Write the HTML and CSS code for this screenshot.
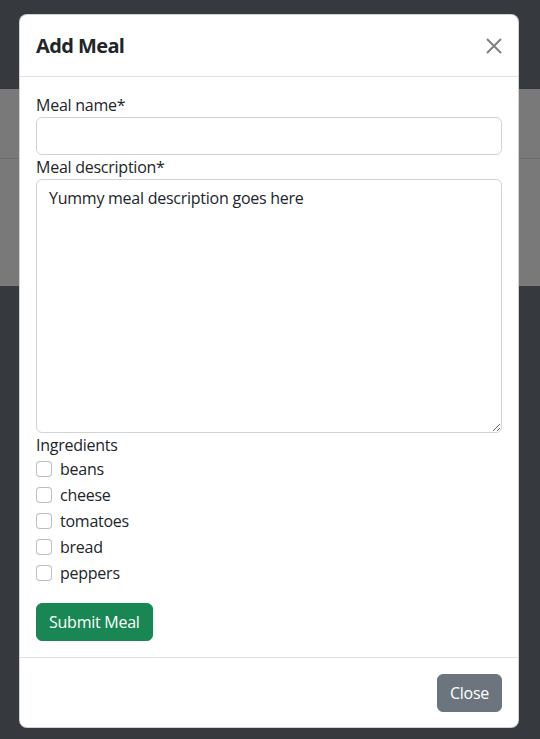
FILE: index.html
```html
<!DOCTYPE html>
<html lang="en">
<head>
<meta charset="utf-8">
<title>Add Meal</title>
<link rel="stylesheet" href="styles.css">
</head>
<body>
<div class="page">
  <div class="page-top"></div>
  <div class="page-band">
    <div class="band-a"></div>
    <div class="band-b"></div>
  </div>
</div>

<div class="modal">
  <div class="modal-header">
    <h5 class="modal-title">Add Meal</h5>
    <button class="btn-close" type="button" aria-label="Close">
      <svg viewBox="0 0 16 16" width="16" height="16"><path d="M1 1L15 15M15 1L1 15" stroke="currentColor" stroke-width="2" fill="none"/></svg>
    </button>
  </div>
  <form class="modal-body">
    <label class="form-label" for="name">Meal name*</label>
    <input class="form-control" id="name" type="text">
    <label class="form-label" for="desc">Meal description*</label>
    <textarea class="form-control textarea" id="desc">Yummy meal description goes here</textarea>
    <label class="form-label">Ingredients</label>
    <div class="checks">
      <label class="form-check"><input type="checkbox" class="check-input"><span>beans</span></label>
      <label class="form-check"><input type="checkbox" class="check-input"><span>cheese</span></label>
      <label class="form-check"><input type="checkbox" class="check-input"><span>tomatoes</span></label>
      <label class="form-check"><input type="checkbox" class="check-input"><span>bread</span></label>
      <label class="form-check"><input type="checkbox" class="check-input"><span>peppers</span></label>
    </div>
    <div class="submit-row"><button type="button" class="btn btn-success">Submit Meal</button></div>
  </form>
  <div class="modal-footer">
    <button type="button" class="btn btn-secondary">Close</button>
  </div>
</div>
</body>
</html>
```
FILE: styles.css
```css
* { box-sizing: border-box; }
html, body { margin: 0; padding: 0; }
body {
  font-family: "Open Sans", "Noto Sans", sans-serif;
  font-size: 16px;
  line-height: 24px;
  letter-spacing: -0.25px;
  color: #212529;
  background: #36393e;
  width: 540px;
  height: 739px;
  overflow: hidden;
}
.page { height: 739px; display: flex; flex-direction: column; }
.page-top { height: 89px; background: #36393e; }
.page-band { height: 197px; display: flex; flex-direction: column; }
.band-a { height: 70px; background: #787978; border-bottom: 1px solid #6c6d6c; }
.band-b { flex: 1; background: #787978; }

.modal {
  position: absolute;
  left: 19px;
  top: 14px;
  width: 500px;
  background: #fff;
  border: 1px solid rgba(0,0,0,0.175);
  border-radius: 8px;
  display: flex;
  flex-direction: column;
}
.modal-header {
  height: 62px;
  padding: 0 16px;
  border-bottom: 1px solid #dee2e6;
  display: flex;
  align-items: center;
  justify-content: space-between;
}
.modal-title {
  margin: 0;
  font-size: 20px;
  line-height: 30px;
  font-weight: 700;
  letter-spacing: -0.6px;
}
.btn-close {
  border: 0;
  background: none;
  padding: 0;
  width: 16px;
  height: 16px;
  color: #808080;
  display: flex;
  cursor: pointer;
}
.modal-body {
  padding: 16px;
  margin: 0;
  display: flex;
  flex-direction: column;
}
.form-label { display: block; }
.form-control {
  display: block;
  width: 100%;
  height: 38px;
  padding: 6px 12px;
  font: inherit;
  letter-spacing: inherit;
  color: #212529;
  background: #fff;
  border: 1px solid #ced4da;
  border-radius: 6px;
  outline: none;
}
.textarea { height: 254px; resize: vertical; }
.checks { display: flex; flex-direction: column; }
.form-check {
  display: flex;
  align-items: flex-start;
  min-height: 24px;
  margin-bottom: 2px;
  gap: 8px;
}
.check-input {
  appearance: none;
  -webkit-appearance: none;
  width: 16px;
  height: 16px;
  margin: 4px 0 0 0;
  border: 1px solid rgba(0,0,0,0.25);
  border-radius: 4px;
  background: #fff;
  flex: none;
}
.submit-row { margin-top: 16px; display: flex; }
.btn {
  font: inherit;
  letter-spacing: inherit;
  line-height: 24px;
  padding: 6px 12px;
  border: 1px solid transparent;
  border-radius: 6px;
  color: #fff;
  cursor: pointer;
}
.btn-success { background: #198754; border-color: #198754; }
.btn-secondary { background: #6c757d; border-color: #6c757d; }
.modal-footer {
  border-top: 1px solid #dee2e6;
  padding: 16px 16px 15px;
  display: flex;
  justify-content: flex-end;
}
```
